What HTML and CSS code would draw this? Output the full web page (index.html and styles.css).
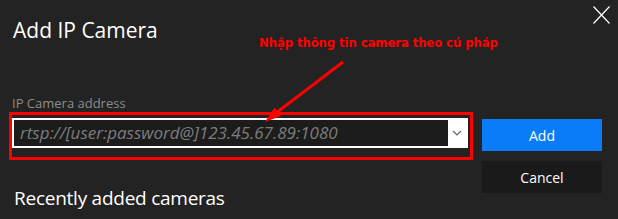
FILE: index.html
```html
<!DOCTYPE html>
<html>
<head>
<meta charset="utf-8">
<link rel="stylesheet" href="styles.css">
</head>
<body>
<div class="dialog">
  <header class="header">
    <h1 class="title">Add IP Camera</h1>
    <button class="close" aria-label="Close">
      <svg width="17" height="18" viewBox="0 0 17 18"><path d="M0.5 0.5 L16.5 17.5 M16.5 0.5 L0.5 17.5" stroke="#ffffff" stroke-width="1.2" fill="none"/></svg>
    </button>
  </header>
  <div class="main">
    <div class="left">
      <div class="label">IP Camera address</div>
      <div class="redbox">
        <div class="combo">
          <div class="combo-input">rtsp://[user:password@]123.45.67.89:1080</div>
          <div class="combo-btn">
            <svg width="10" height="6" viewBox="0 0 10 6"><path d="M1 1 L5 5 L9 1" stroke="#666" stroke-width="1.2" fill="none"/></svg>
          </div>
        </div>
      </div>
      <h2 class="recent">Recently added cameras</h2>
    </div>
    <div class="actions">
      <button class="btn btn-add">Add</button>
      <button class="btn btn-cancel">Cancel</button>
    </div>
  </div>
  <div class="note">Nhập thông tin camera theo cú pháp</div>
  <svg class="arrow" width="618" height="219" viewBox="0 0 618 219">
    <line x1="343" y1="62" x2="276" y2="113" stroke="#ff0000" stroke-width="3"/>
    <polygon points="265,122 281,116 274.5,107.5" fill="#ff0000"/>
  </svg>
</div>
</body>
</html>
```
FILE: styles.css
```css
html, body {
  margin: 0;
  padding: 0;
  background: #232323;
  overflow: hidden;
}
.dialog {
  position: relative;
  width: 618px;
  height: 219px;
  font-family: "Open Sans", "Noto Sans", sans-serif;
  color: #ffffff;
}
.header {
  display: flex;
  justify-content: space-between;
  align-items: flex-start;
  height: 80px;
}
.title {
  margin: 15px 0 0 13px;
  font-size: 21px;
  line-height: 30px;
  font-weight: 400;
}
.close {
  background: none;
  border: 0;
  padding: 0;
  margin: 6px 8px 0 0;
  width: 17px;
  height: 18px;
}
.close svg { display: block; }
.main {
  display: flex;
  align-items: flex-start;
  margin-top: 14px;
}
.left {
  display: flex;
  flex-direction: column;
}
.label {
  margin-left: 12px;
  font-size: 13px;
  line-height: 18px;
  color: #8c8c8c;
}
.redbox {
  margin-left: 9px;
  width: 456px;
  border: 3px solid #ff0000;
  padding: 3px 2px 9px 0;
}
.combo {
  display: flex;
  height: 26px;
  border: 2px solid #ffffff;
  background: #1c1c1c;
}
.combo-input {
  flex: 1;
  padding-left: 6px;
  font-size: 17px;
  line-height: 26px;
  font-style: italic;
  color: #7c7c7c;
  white-space: nowrap;
  overflow: hidden;
}
.combo-btn {
  width: 18px;
  background: #ffffff;
  display: flex;
  align-items: center;
  justify-content: center;
}
.combo-btn svg { display: block; }
.recent {
  margin: 24px 0 0 14px;
  font-size: 19px;
  letter-spacing: -0.25px;
  line-height: 28px;
  font-weight: 400;
}
.actions {
  display: flex;
  flex-direction: column;
  gap: 10px;
  margin: 25px 0 0 9px;
}
.btn {
  width: 120px;
  height: 32px;
  border: 0;
  padding: 0;
  font-family: "Open Sans", "Noto Sans", sans-serif;
  font-size: 14px;
  color: #ffffff;
}
.btn-add { background: #0a7cf7; }
.btn-cancel { background: #1a1a1a; }
.note {
  position: absolute;
  left: 259px;
  top: 34px;
  font-family: "DejaVu Sans Condensed", "DejaVu Sans", sans-serif;
  font-weight: bold;
  font-size: 13px;
  letter-spacing: -0.1px;
  line-height: 18px;
  color: #ff0000;
  white-space: nowrap;
}
.arrow {
  position: absolute;
  left: 0;
  top: 0;
  pointer-events: none;
}
```
